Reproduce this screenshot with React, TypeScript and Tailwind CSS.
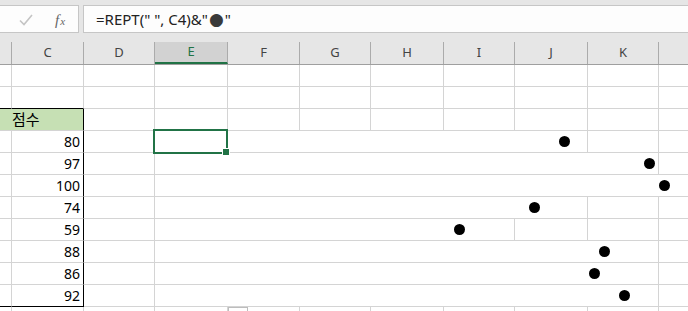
import React from 'react';

const COLS = [
    { w: 12, label: '' },
    { w: 72, label: 'C' },
    { w: 71, label: 'D' },
    { w: 73, label: 'E' },
    { w: 72, label: 'F' },
    { w: 71, label: 'G' },
    { w: 73, label: 'H' },
    { w: 71, label: 'I' },
    { w: 73, label: 'J' },
    { w: 71, label: 'K' },
    { w: 81, label: '' },
];

const SCORES = [80, 97, 100, 74, 59, 88, 86, 92];

// x where each column starts (page coords)
const EDGES = COLS.reduce<number[]>((acc, c) => [...acc, acc[acc.length - 1] + c.w], [0]);

const font = { fontFamily: '"Noto Sans", "Noto Sans CJK KR", sans-serif' };

function Cell({ w, className = '', children }: { w: number; className?: string; children?: React.ReactNode }) {
    return (
        <div
            className={`h-[22px] shrink-0 border-r border-b border-[#d4d4d4] flex items-center ${className}`}
            style={{ width: w }}
        >
            {children}
        </div>
    );
}

function EmptyRow({ blackBottom = false }: { blackBottom?: boolean }) {
    return (
        <div className="flex">
            {COLS.map((c, i) => (
                <Cell key={i} w={c.w} className={blackBottom && i < 2 ? 'border-b-black' : ''} />
            ))}
        </div>
    );
}

function ScoreRow({ score, last }: { score: number; last: boolean }) {
    const dotLeft = 4 + score * 5;
    const dotEnd = EDGES[3] + dotLeft + 11;
    // text of E overflows to the right until the column holding the dot
    let endCol = 3;
    while (endCol < COLS.length - 1 && EDGES[endCol + 1] < dotEnd) endCol++;
    const spanW = EDGES[endCol + 1] - EDGES[3];

    return (
        <div className="flex">
            <Cell w={COLS[0].w} className={last ? 'border-b-black' : ''} />
            <Cell w={COLS[1].w} className={`justify-end pr-[3px] text-[14px] text-black border-r-black ${last ? 'border-b-black' : ''}`}>
                {score}
            </Cell>
            <Cell w={COLS[2].w} />
            <Cell w={spanW} className="border-r-[#d4d4d4]">
                <div className="w-[11px] h-[11px] rounded-full bg-black shrink-0" style={{ marginLeft: dotLeft }} />
            </Cell>
            {COLS.slice(endCol + 1).map((c, i) => (
                <Cell key={i} w={c.w} />
            ))}
        </div>
    );
}

export default function App() {
    return (
        <div className="relative w-[688px] h-[311px] overflow-hidden bg-white" style={font}>
            {/* formula bar */}
            <div className="h-[42px] bg-[#e6e6e6] pt-[5px] flex">
                <div className="w-[79px] h-[28px] bg-[#fdfdfd] border-y border-r border-[#c6c6c6] flex items-center relative">
                    <svg className="absolute left-[19px] top-[8px]" width="14" height="12" viewBox="0 0 14 12">
                        <path d="M1 6.5 L5 10.5 L13 1" fill="none" stroke="#c4c4c4" strokeWidth="1.6" />
                    </svg>
                    <span
                        className="absolute left-[55px] top-[3px] italic text-[15px] text-[#666]"
                        style={{ fontFamily: '"Liberation Serif", serif' }}
                    >
                        f<span className="text-[11px] ml-[1px]">x</span>
                    </span>
                </div>
                <div className="ml-[4px] flex-1 h-[28px] bg-[#fdfdfd] border-y border-l border-[#c6c6c6] flex items-center pl-[12px] text-[15px] text-[#222] whitespace-pre">
                    =REPT(" ", C4)&"
                    <span className="text-[#3a3a3a] text-[17px] leading-none mx-[1px]" style={{ fontFamily: '"DejaVu Sans", sans-serif' }}>●</span>
                    "
                </div>
            </div>

            {/* column headers */}
            <div className="flex h-[23px] bg-[#e6e6e6] border-b border-[#9f9f9f]">
                {COLS.map((c, i) => (
                    <div
                        key={i}
                        className={`shrink-0 h-full border-r border-[#ababab] flex items-center justify-center text-[13px] ${
                            c.label === 'E' ? 'bg-[#d2d2d2] border-b-2 border-b-[#217346] text-[#217346]' : 'text-[#444]'
                        }`}
                        style={{ width: c.w }}
                    >
                        {c.label}
                    </div>
                ))}
            </div>

            {/* sheet */}
            <EmptyRow />
            <EmptyRow blackBottom />
            <div className="flex">
                <div className="h-[22px] w-[84px] shrink-0 bg-[#c6e0b4] border-r border-b border-r-black border-b-[#d4d4d4] flex items-center pl-[12px] text-[15px] text-black" style={{ fontFamily: '"Noto Sans CJK KR", sans-serif' }}>
                    점수
                </div>
                {COLS.slice(2).map((c, i) => (
                    <Cell key={i} w={c.w} />
                ))}
            </div>
            {SCORES.map((s, i) => (
                <ScoreRow key={i} score={s} last={i === SCORES.length - 1} />
            ))}
            <EmptyRow />

            {/* selection on E4 */}
            <div className="absolute left-[153px] top-[129px] w-[75px] h-[25px] border-2 border-[#217346]" />
            <div className="absolute left-[222px] top-[148px] w-[8px] h-[8px] bg-[#217346] border border-white" />

            {/* quick analysis button peeking at the bottom */}
            <div className="absolute left-[228px] top-[307px] w-[20px] h-[10px] bg-white border border-[#bdbdbd]" />
        </div>
    );
}
